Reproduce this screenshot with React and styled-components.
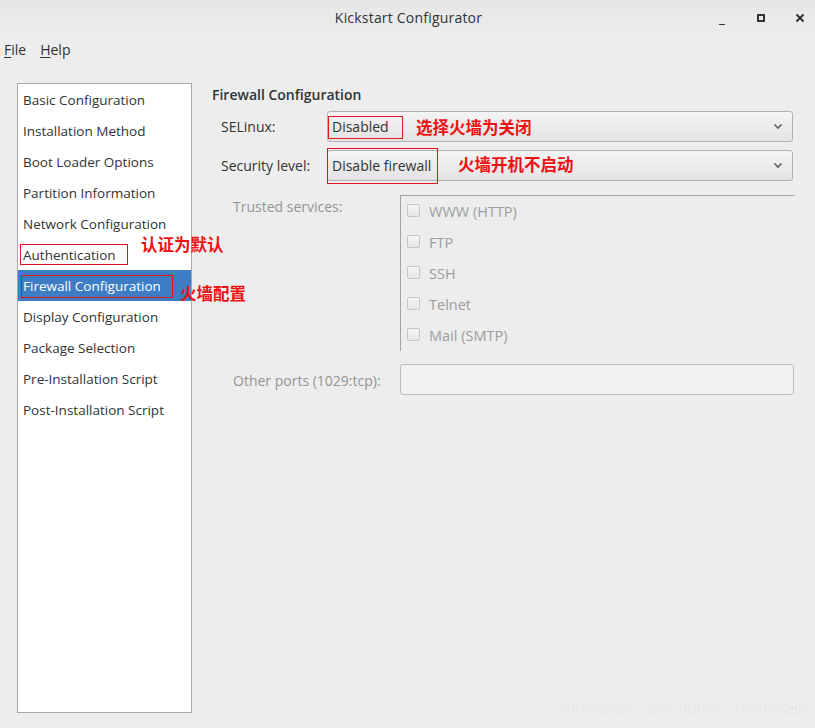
import React from "react"
import styled, { createGlobalStyle } from "styled-components"

const GlobalStyle = createGlobalStyle`
  html, body {
    margin: 0;
    padding: 0;
    background: #ededed;
  }
  body {
    font-family: "Open Sans", "Noto Sans", "Noto Sans CJK SC", sans-serif;
    color: #2e3436;
  }
`

const sections = [
  "Basic Configuration",
  "Installation Method",
  "Boot Loader Options",
  "Partition Information",
  "Network Configuration",
  "Authentication",
  "Firewall Configuration",
  "Display Configuration",
  "Package Selection",
  "Pre-Installation Script",
  "Post-Installation Script",
]

const services = ["WWW (HTTP)", "FTP", "SSH", "Telnet", "Mail (SMTP)"]

function App() {
  return (
    <Window>
      <GlobalStyle />
      <TitleBar>
        <Title>Kickstart Configurator</Title>
        <Controls>
          <Control>_</Control>
          <Control>
            <svg width="10" height="10" viewBox="0 0 10 10">
              <rect x="2" y="2" width="6" height="6" fill="none" stroke="#2e3436" strokeWidth="2" />
            </svg>
          </Control>
          <Control>
            <svg width="10" height="10" viewBox="0 0 10 10">
              <path d="M1.5 1.5 L8.5 8.5 M8.5 1.5 L1.5 8.5" stroke="#2e3436" strokeWidth="2" />
            </svg>
          </Control>
        </Controls>
      </TitleBar>

      <MenuBar>
        <MenuItem><u>F</u>ile</MenuItem>
        <MenuItem><u>H</u>elp</MenuItem>
      </MenuBar>

      <Body>
        <Sidebar>
          {sections.map((name) => (
            <NavItem key={name} $active={name === "Firewall Configuration"}>
              {name === "Authentication" && <NoteBox $w={108} $h={21} $l={2} $t={-0.5} />}
              {name === "Firewall Configuration" && <NoteBox $w={152} $h={23} $l={3} $t={0.5} />}
              {name}
              {name === "Authentication" && <Note $l={123} $t={-11}>认证为默认</Note>}
              {name === "Firewall Configuration" && <Note $l={162} $t={7}>火墙配置</Note>}
            </NavItem>
          ))}
        </Sidebar>

        <Content>
          <Heading>Firewall Configuration</Heading>

          <FieldRow>
            <FieldLabel>SELinux:</FieldLabel>
            <Combo>
              <ComboText>
                <NoteBox $w={75} $h={23} $l={-4} $t={1} />
                Disabled
                <Note $l={84} $t={0}>选择火墙为关闭</Note>
              </ComboText>
              <Chevron />
            </Combo>
          </FieldRow>

          <FieldRow>
            <FieldLabel>Security level:</FieldLabel>
            <Combo>
              <ComboText>
                <NoteBox $w={111} $h={36} $l={-5} $t={0} />
                Disable firewall
                <Note $l={126} $t={-2}>火墙开机不启动</Note>
              </ComboText>
              <Chevron />
            </Combo>
          </FieldRow>

          <Services>
            <DimLabel>Trusted services:</DimLabel>
            <ServiceFrame>
              {services.map((s) => (
                <ServiceRow key={s}>
                  <Check />
                  {s}
                </ServiceRow>
              ))}
            </ServiceFrame>
          </Services>

          <PortsRow>
            <DimLabel>Other ports (1029:tcp):</DimLabel>
            <PortsEntry />
          </PortsRow>
        </Content>
      </Body>

      <Watermark>https://blog.csdn.net/qq_35887546</Watermark>
    </Window>
  )
}

function Chevron() {
  return (
    <svg width="10" height="7" viewBox="0 0 10 7">
      <path d="M1.5 1.5 L5 5 L8.5 1.5" fill="none" stroke="#5c6163" strokeWidth="1.6" />
    </svg>
  )
}

export default App

const Window = styled.div`
  position: relative;
  width: 815px;
  height: 728px;
  background: #ededed;
  overflow: hidden;
  display: flex;
  flex-direction: column;
`

const TitleBar = styled.div`
  height: 35px;
  position: relative;
  display: flex;
  align-items: center;
  justify-content: center;
  background: linear-gradient(#e6e6e6, #ececec);
`

const Title = styled.div`
  font-size: 14px;
  color: #2e3436;
  letter-spacing: 0.2px;
  margin-left: 2px;
`

// window buttons sit over the right end of the title bar
const Controls = styled.div`
  position: absolute;
  right: 9px;
  top: 0;
  height: 35px;
  display: flex;
  align-items: center;
  gap: 27px;
`

const Control = styled.span`
  width: 12px;
  display: flex;
  justify-content: center;
  font-size: 14px;
  font-weight: bold;
  color: #2e3436;
`

const MenuBar = styled.div`
  height: 30px;
  display: flex;
  align-items: center;
  gap: 14px;
  padding-left: 4px;
  font-size: 14px;
  color: #2e3436;
`

const MenuItem = styled.span`
  u {
    text-decoration-thickness: 1px;
    text-underline-offset: 2px;
  }
`

const Body = styled.div`
  flex: 1;
  display: flex;
  padding: 19px 22px 15px 17px;
  gap: 20px;
`

const Sidebar = styled.div`
  width: 175px;
  flex-shrink: 0;
  background: #fff;
  border: 1px solid #a8a8a8;
  box-sizing: border-box;
  height: 630px;
`

const NavItem = styled.div`
  position: relative;
  height: 31px;
  display: flex;
  align-items: center;
  padding-left: 5px;
  font-size: 13.5px;
  white-space: nowrap;
  color: ${(p) => (p.$active ? "#ffffff" : "#2e3436")};
  background: ${(p) => (p.$active ? "#3d7dc6" : "transparent")};
`

// red annotation rectangles drawn over the screenshot
const NoteBox = styled.span`
  position: absolute;
  left: ${(p) => p.$l}px;
  top: 50%;
  margin-top: ${(p) => -p.$h / 2 + p.$t}px;
  width: ${(p) => p.$w}px;
  height: ${(p) => p.$h}px;
  border: 1px solid #e0141b;
  box-sizing: border-box;
  pointer-events: none;
`

const Note = styled.span`
  position: absolute;
  left: ${(p) => p.$l}px;
  top: 50%;
  margin-top: ${(p) => p.$t - 11}px;
  font-family: "Noto Sans CJK SC", sans-serif;
  font-weight: bold;
  font-size: 16.5px;
  line-height: 22px;
  color: #ee1111;
  white-space: nowrap;
  z-index: 2;
`

const Content = styled.div`
  flex: 1;
  display: flex;
  flex-direction: column;
  padding-top: 2px;
`

const Heading = styled.div`
  font-size: 14px;
  font-weight: 600;
  color: #2e3436;
  height: 20px;
  margin-bottom: 6px;
`

const FieldRow = styled.div`
  display: flex;
  align-items: center;
  height: 31px;
  margin-bottom: 8px;
  padding-left: 9px;
`

const FieldLabel = styled.div`
  width: 106px;
  font-size: 14px;
  color: #2e3436;
`

const Combo = styled.div`
  flex: 1;
  height: 31px;
  box-sizing: border-box;
  border: 1px solid #b1b1b1;
  border-radius: 3px;
  background: linear-gradient(#f4f4f4, #e3e3e3);
  display: flex;
  align-items: center;
  justify-content: space-between;
  padding: 0 9px 0 4px;
`

const ComboText = styled.span`
  position: relative;
  font-size: 14px;
  color: #2e3436;
`

const Services = styled.div`
  display: flex;
  padding-left: 21px;
  margin-top: 6px;
`

const DimLabel = styled.div`
  width: 167px;
  font-size: 14px;
  color: #929595;
  padding-top: 2px;
`

const ServiceFrame = styled.div`
  flex: 1;
  height: 156px;
  margin-right: -2px;
  border-top: 1px solid #a4a4a4;
  border-left: 1px solid #a4a4a4;
  padding: 0 0 0 6px;
  box-sizing: border-box;
`

const ServiceRow = styled.div`
  height: 31px;
  display: flex;
  align-items: center;
  gap: 9px;
  font-size: 14.5px;
  color: #9b9e9e;
`

const Check = styled.span`
  width: 11px;
  height: 11px;
  border: 1px solid #c6c6c6;
  border-radius: 2px;
  background: linear-gradient(#f6f6f6, #e6e6e6);
  margin-bottom: 2px;
`

const PortsRow = styled.div`
  display: flex;
  align-items: center;
  padding-left: 21px;
  margin-top: 13px;
`

const PortsEntry = styled.div`
  flex: 1;
  height: 31px;
  margin-right: -1px;
  box-sizing: border-box;
  border: 1px solid #bdbdbd;
  border-radius: 3px;
  background: #f1f1f1;
`

// csdn watermark overlaid on the corner of the screenshot
const Watermark = styled.div`
  position: absolute;
  right: 10px;
  bottom: 9px;
  font-family: "Liberation Sans", sans-serif;
  font-size: 16px;
  color: #f5f5f5;
  text-shadow: 0 0 1px #c8c8c8;
`
